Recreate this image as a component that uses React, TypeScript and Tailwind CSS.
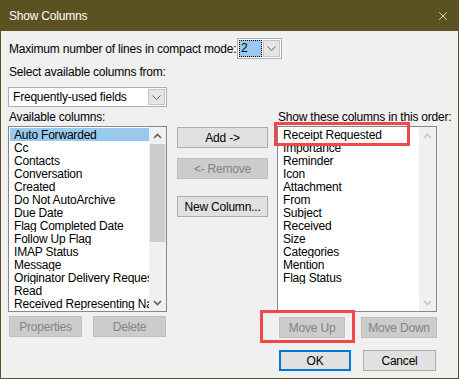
import { X } from "lucide-react"

const available = [
  "Auto Forwarded",
  "Cc",
  "Contacts",
  "Conversation",
  "Created",
  "Do Not AutoArchive",
  "Due Date",
  "Flag Completed Date",
  "Follow Up Flag",
  "IMAP Status",
  "Message",
  "Originator Delivery Requested",
  "Read",
  "Received Representing Name",
]

const shown = [
  "Receipt Requested",
  "Importance",
  "Reminder",
  "Icon",
  "Attachment",
  "From",
  "Subject",
  "Received",
  "Size",
  "Categories",
  "Mention",
  "Flag Status",
]

function Chevron({ up, color }: { up?: boolean; color: string }) {
  return (
    <svg width="9" height="6" viewBox="0 0 9 6">
      <path
        d={up ? "M1 5 L4.5 1.5 L8 5" : "M1 1 L4.5 4.5 L8 1"}
        fill="none"
        stroke={color}
        strokeWidth="1.6"
      />
    </svg>
  )
}

function DropArrow() {
  return (
    <svg width="9" height="5" viewBox="0 0 9 5">
      <path d="M0.5 0.5 L4.5 4.5 L8.5 0.5" fill="none" stroke="#606060" strokeWidth="1" />
    </svg>
  )
}

function Button({
  label,
  w,
  disabled,
  primary,
}: {
  label: string
  w: string
  disabled?: boolean
  primary?: boolean
}) {
  return (
    <div
      className={`${w} h-[21px] flex items-center justify-center whitespace-nowrap ${
        disabled
          ? "bg-[#cccccc] border border-[#bfbfbf] text-[#838383]"
          : primary
          ? "bg-[#e1e1e1] border-2 border-[#0078d7] text-black"
          : "bg-[#e1e1e1] border border-[#adadad] text-black"
      }`}
    >
      {label}
    </div>
  )
}

function ListBox({
  items,
  selected,
  enabled,
}: {
  items: string[]
  selected?: number
  enabled: boolean
}) {
  const arrow = enabled ? "#606060" : "#c4c4c4"
  return (
    <div className="h-[186px] border border-[#828790] bg-white flex">
      <div className="flex-1 min-w-0 overflow-hidden pt-[1px] pl-[1px]">
        {items.map((it, i) => (
          <div
            key={it}
            className={`h-[13px] leading-[14px] pl-[4px] whitespace-nowrap overflow-hidden ${
              i === selected ? "bg-[#99c9ef]" : ""
            }`}
          >
            {it}
          </div>
        ))}
      </div>
      <div className="w-[17px] bg-[#f0f0f0] flex flex-col">
        <div className="h-[17px] flex items-center justify-center">
          <Chevron up color={arrow} />
        </div>
        <div className="flex-1 flex flex-col px-[1px]">
          {enabled && <div className="h-[98px] bg-[#cdcdcd]" />}
        </div>
        <div className="h-[17px] flex items-center justify-center">
          <Chevron color={arrow} />
        </div>
      </div>
    </div>
  )
}

export default function App() {
  return (
    <div
      className="relative w-[459px] h-[379px] bg-[#f0f0f0] border-x border-b border-[#5c5221] flex flex-col text-[12px] tracking-[-0.2px] text-black"
      style={{ fontFamily: '"Segoe UI", "Liberation Sans", sans-serif' }}
    >
      {/* Title bar */}
      <div className="h-[31px] -mx-[1px] bg-[#5c5221] flex items-center justify-between pl-[9px] pr-[9px] text-white">
        <span className="text-[12px]">Show Columns</span>
        <X size={14} strokeWidth={1.3} />
      </div>

      <div className="pl-[7px] pr-[7px]">
        {/* Compact mode lines */}
        <div className="mt-[7px] h-[21px] flex items-center">
          <span className="w-[229px] pl-[1px] whitespace-nowrap">Maximum number of lines in compact mode:</span>
          <div className="w-[45px] h-[21px] border border-[#adadad] bg-white flex p-[1px]">
            <div className="w-[23px] bg-[#99c9ef] border border-dotted border-black leading-[15px] pl-[1px]">2</div>
            <div className="flex-1 ml-[1px] bg-[#e5e5e5] border border-[#c4c4c4] flex items-center justify-center">
              <DropArrow />
            </div>
          </div>
        </div>

        <div className="mt-[6px] leading-[15px] pl-[1px]">Select available columns from:</div>

        <div className="mt-[7px] w-[159px] h-[20px] border border-[#adadad] bg-white flex p-[1px]">
          <div className="flex-1 leading-[16px] pl-[3px] whitespace-nowrap">Frequently-used fields</div>
          <div className="w-[17px] bg-[#e5e5e5] border border-[#c4c4c4] flex items-center justify-center">
            <DropArrow />
          </div>
        </div>

        {/* Columns */}
        <div className="mt-[3px] flex">
          <div className="w-[159px]">
            <div className="leading-[15px] pl-[1px]">Available columns:</div>
            <div className="mt-[1px]">
              <ListBox items={available} selected={0} enabled />
            </div>
            <div className="mt-[4px] flex gap-[11px] pl-[1px]">
              <Button label="Properties" w="w-[73px]" disabled />
              <Button label="Delete" w="w-[73px]" disabled />
            </div>
          </div>

          <div className="ml-[10px] w-[91px] pt-[17px] flex flex-col">
            <Button label="Add ->" w="w-[91px]" />
            <div className="mt-[10px]">
              <Button label="<- Remove" w="w-[91px]" disabled />
            </div>
            <div className="mt-[17px]">
              <Button label="New Column..." w="w-[91px]" />
            </div>
          </div>

          <div className="ml-[9px] w-[160px]">
            <div className="leading-[15px] pl-[1px] whitespace-nowrap">Show these columns in this order:</div>
            <div className="mt-[1px]">
              <ListBox items={shown} enabled={false} />
            </div>
            <div className="mt-[5px] flex gap-[16px] pl-[2px]">
              <Button label="Move Up" w="w-[68px]" disabled />
              <Button label="Move Down" w="w-[78px]" disabled />
            </div>
            <div className="mt-[12px] flex gap-[12px] pl-[2px]">
              <Button label="OK" w="w-[72px]" primary />
              <Button label="Cancel" w="w-[73px]" />
            </div>
          </div>
        </div>
      </div>

      {/* Annotation boxes */}
      <div className="absolute left-[273px] top-[122px] w-[136px] h-[24px] border-[3px] border-[#f0474a]" />
      <div className="absolute left-[259px] top-[310px] w-[95px] h-[33px] border-[3px] border-[#f0474a]" />
    </div>
  )
}
